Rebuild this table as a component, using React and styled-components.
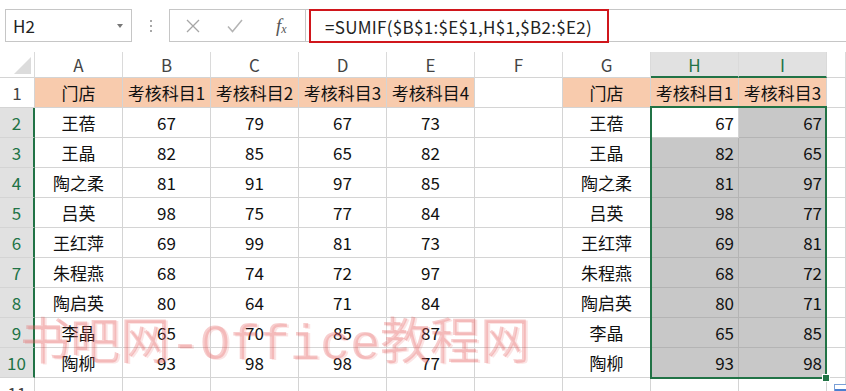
import React from "react";
import styled, { createGlobalStyle } from "styled-components";

const GlobalStyle = createGlobalStyle`
  html, body {
    margin: 0;
    padding: 0;
    background: #ffffff;
    overflow: hidden;
  }
  body {
    font-family: "Noto Sans CJK SC", "Noto Sans", sans-serif;
  }
`;

const GREEN = "#217346";

const Page = styled.div`
  position: relative;
  width: 846px;
  height: 391px;
  overflow: hidden;
  background: #fff;
`;

const FormulaBar = styled.div`
  display: flex;
  align-items: flex-start;
  height: 52px;
  padding-top: 9px;
  box-sizing: border-box;
`;

const NameBox = styled.div`
  display: flex;
  align-items: center;
  justify-content: space-between;
  margin-left: 5px;
  width: 127px;
  height: 33px;
  box-sizing: border-box;
  border: 1px solid #c6c6c6;
  padding: 0 8px 0 7px;
  font-size: 17px;
  color: #222;
`;

const Caret = styled.span`
  width: 0;
  height: 0;
  border-left: 3px solid transparent;
  border-right: 3px solid transparent;
  border-top: 4px solid #777;
`;

const Dots = styled.div`
  width: 37px;
  height: 33px;
  display: flex;
  flex-direction: column;
  align-items: center;
  justify-content: center;
  gap: 3px;

  & > i {
    width: 2px;
    height: 2px;
    background: #a8a8a8;
  }
`;

const FxBox = styled.div`
  display: flex;
  align-items: center;
  width: 137px;
  height: 33px;
  box-sizing: border-box;
  border: 1px solid #c6c6c6;
  padding-left: 16px;
  gap: 27px;
`;

const FxLabel = styled.span`
  font-family: "Liberation Serif", serif;
  font-style: italic;
  font-size: 19px;
  color: #555;
  margin-left: 6px;

  & > sub {
    font-size: 12px;
    vertical-align: -1px;
  }
`;

const FormulaInput = styled.div`
  flex: 1;
  height: 33px;
  box-sizing: border-box;
  border-top: 1px solid #c6c6c6;
  border-bottom: 1px solid #c6c6c6;
  padding-left: 3px;
`;

const Highlight = styled.div`
  width: 300px;
  height: 34px;
  margin-top: -1px;
  box-sizing: border-box;
  border: 2px solid #d0161c;
  display: flex;
  align-items: center;
  padding-left: 14px;
  font-size: 17px;
  color: #222;
  letter-spacing: 0.3px;
`;

const Sheet = styled.div`
  position: relative;
  display: grid;
  grid-template-columns: 35px repeat(9, 88px) 1fr;
  grid-template-rows: 26px repeat(11, 30px);
  font-size: 17px;
`;

const Cell = styled.div`
  box-sizing: border-box;
  border-right: 1px solid ${(p) => (p.$sel ? "#b4b4b4" : "#d4d4d4")};
  border-bottom: 1px solid ${(p) => (p.$sel ? "#b4b4b4" : "#d4d4d4")};
  background: ${(p) => (p.$head ? "#f8cbad" : p.$sel ? "#c8c8c8" : "#fff")};
  display: flex;
  align-items: center;
  justify-content: ${(p) => (p.$right ? "flex-end" : "center")};
  padding-right: ${(p) => (p.$right ? "4px" : "0")};
  color: #111;
  white-space: nowrap;
  overflow: hidden;
`;

const ColHead = styled.div`
  box-sizing: border-box;
  border-right: 1px solid #dadada;
  border-bottom: ${(p) => (p.$active ? `2px solid ${GREEN}` : "1px solid #d4d4d4")};
  background: ${(p) => (p.$active ? "#e1e1e1" : "#fff")};
  color: ${(p) => (p.$active ? GREEN : "#444")};
  display: flex;
  align-items: center;
  justify-content: center;
  font-size: 17px;
`;

const Corner = styled.div`
  box-sizing: border-box;
  border-right: 1px solid #dadada;
  border-bottom: 1px solid #d4d4d4;
  position: relative;

  &::after {
    content: "";
    position: absolute;
    right: 3px;
    bottom: 3px;
    width: 0;
    height: 0;
    border-left: 17px solid transparent;
    border-bottom: 17px solid #dcdcdc;
  }
`;

const RowHead = styled.div`
  box-sizing: border-box;
  border-bottom: 1px solid #d4d4d4;
  border-right: ${(p) => (p.$active ? `2px solid ${GREEN}` : "1px solid #d4d4d4")};
  background: ${(p) => (p.$active ? "#e1e1e1" : "#fff")};
  color: ${(p) => (p.$active ? GREEN : "#444")};
  display: flex;
  align-items: center;
  justify-content: center;
  font-size: 17px;
`;

/* absolutely placed in the H2:I10 grid area, so it stays out of auto-placement */
const Selection = styled.div`
  position: absolute;
  grid-column: 9 / 11;
  grid-row: 3 / 12;
  top: -2px;
  left: -1px;
  right: 0;
  bottom: -1px;
  border: 2px solid ${GREEN};
  pointer-events: none;
  z-index: 2;

  &::after {
    content: "";
    position: absolute;
    right: -5px;
    bottom: -5px;
    width: 6px;
    height: 6px;
    background: ${GREEN};
    border: 1px solid #fff;
  }
`;

const QuickIcon = styled.div`
  position: absolute;
  left: 834px;
  top: 384px;
  width: 14px;
  height: 10px;
  border: 1px solid #7a9fd6;
  background: linear-gradient(#fff 0 40%, #4a7fd0 40% 100%);
  z-index: 3;
`;

const Watermark = styled.div`
  position: absolute;
  left: 20px;
  top: 321px;
  font-family: "Liberation Mono", "Noto Sans CJK SC", monospace;
  font-size: 50px;
  line-height: 1;
  color: rgba(228, 90, 90, 0.3);
  text-shadow: 2px 1px 0 rgba(228, 90, 90, 0.16);
  white-space: nowrap;
  pointer-events: none;
  z-index: 4;
`;

const names = ["王蓓", "王晶", "陶之柔", "吕英", "王红萍", "朱程燕", "陶启英", "李晶", "陶柳"];
const scores = [
  [67, 79, 67, 73],
  [82, 85, 65, 82],
  [81, 91, 97, 85],
  [98, 75, 77, 84],
  [69, 99, 81, 73],
  [68, 74, 72, 97],
  [80, 64, 71, 84],
  [65, 70, 85, 87],
  [93, 98, 98, 77],
];
const letters = ["A", "B", "C", "D", "E", "F", "G", "H", "I"];

const CrossIcon = () => (
  <svg width="14" height="14" viewBox="0 0 14 14">
    <path d="M1 1L13 13M13 1L1 13" stroke="#a6a6a6" strokeWidth="1.3" fill="none" />
  </svg>
);

const CheckIcon = () => (
  <svg width="16" height="14" viewBox="0 0 16 14">
    <path d="M1 7.5L5.5 12.5L15 1" stroke="#b4b4b4" strokeWidth="1.5" fill="none" />
  </svg>
);

export default function App() {
  return (
    <Page>
      <GlobalStyle />
      <FormulaBar>
        <NameBox>
          <span>H2</span>
          <Caret />
        </NameBox>
        <Dots>
          <i />
          <i />
          <i />
        </Dots>
        <FxBox>
          <CrossIcon />
          <CheckIcon />
          <FxLabel>
            f<sub>x</sub>
          </FxLabel>
        </FxBox>
        <FormulaInput>
          <Highlight>=SUMIF($B$1:$E$1,H$1,$B2:$E2)</Highlight>
        </FormulaInput>
      </FormulaBar>

      <Sheet>
        <Corner />
        {letters.map((l) => (
          <ColHead key={l} $active={l === "H" || l === "I"}>
            {l}
          </ColHead>
        ))}
        <ColHead />

        <RowHead>1</RowHead>
        <Cell $head>门店</Cell>
        <Cell $head>考核科目1</Cell>
        <Cell $head>考核科目2</Cell>
        <Cell $head>考核科目3</Cell>
        <Cell $head>考核科目4</Cell>
        <Cell />
        <Cell $head>门店</Cell>
        <Cell $head>考核科目1</Cell>
        <Cell $head>考核科目3</Cell>
        <Cell />

        {names.map((n, i) => (
          <React.Fragment key={n}>
            <RowHead $active>{i + 2}</RowHead>
            <Cell>{n}</Cell>
            {scores[i].map((s, j) => (
              <Cell key={j}>{s}</Cell>
            ))}
            <Cell />
            <Cell>{n}</Cell>
            <Cell $right $sel={i !== 0}>
              {scores[i][0]}
            </Cell>
            <Cell $right $sel>
              {scores[i][2]}
            </Cell>
            <Cell />
          </React.Fragment>
        ))}

        <RowHead>11</RowHead>
        {Array.from({ length: 10 }).map((_, k) => (
          <Cell key={k} />
        ))}

        <Selection />
      </Sheet>

      <QuickIcon />
      <Watermark>书吧网-Office教程网</Watermark>
    </Page>
  );
}
